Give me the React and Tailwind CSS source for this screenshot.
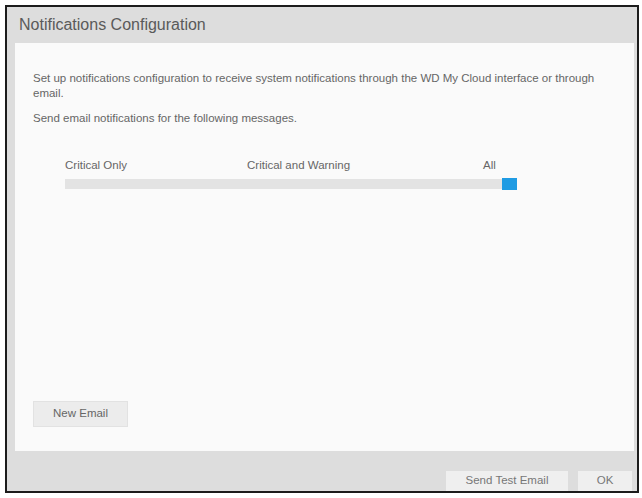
import React from 'react'

function App() {
    const levels = [
        { label: 'Critical Only', w: 'w-[182px]' },
        { label: 'Critical and Warning', w: 'w-[236px]' },
        { label: 'All', w: '' },
    ]

    return (
        <div className="w-[642px] h-[498px] bg-white pt-[5px] pl-[5px] font-['Liberation_Sans',Arial,sans-serif]">
            <div className="w-[634px] h-[488px] border-2 border-[#1c1c1c] bg-[#dddddd] flex flex-col">
                <div className="h-[36px] pl-[12px] flex items-center text-[16px] text-[#5a5a5a]">Notifications Configuration</div>

                <div className="flex-1 ml-[8px] mr-[3px] bg-[#fafafa] flex flex-col pl-[18px] pt-[28px] pb-[24px] text-[11.5px] text-[#666]">
                    <div className="leading-[15px] pr-[28px]">
                        Set up notifications configuration to receive system notifications through the WD My Cloud interface or through email.
                    </div>
                    <div className="mt-[10px] leading-[15px]">Send email notifications for the following messages.</div>

                    <div className="ml-[32px] mt-[32px]">
                        <div className="flex leading-[15px]">
                            {levels.map((l, i) => (
                                <div key={i} className={l.w}>{l.label}</div>
                            ))}
                        </div>
                        <div className="flex items-center mt-[5px]">
                            <div className="w-[437px] h-[10px] bg-[#e3e3e3]"></div>
                            <div className="w-[15px] h-[12px] bg-[#1f9be3]"></div>
                        </div>
                    </div>

                    <div className="mt-auto">
                        <button className="w-[95px] h-[26px] bg-[#ececec] border border-[#e2e2e2] text-[#666] text-[11.5px]">New Email</button>
                    </div>
                </div>

                <div className="h-[40px] flex items-end justify-end gap-[10px] pr-[5px]">
                    <button className="w-[122px] h-[20px] bg-[#efefef] text-[#777] text-[11.5px]">Send Test Email</button>
                    <button className="w-[54px] h-[20px] bg-[#efefef] text-[#777] text-[11.5px]">OK</button>
                </div>
            </div>
        </div>
    )
}

export default App
